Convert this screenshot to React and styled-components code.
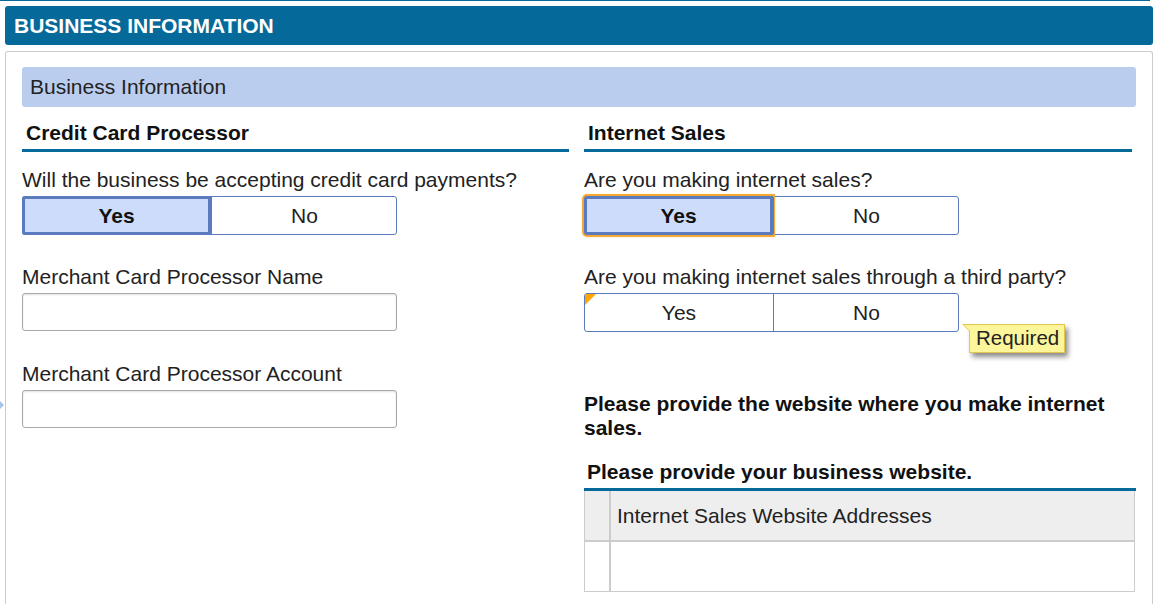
import React from 'react'
import styled, { createGlobalStyle, css } from 'styled-components'

const GlobalStyle = createGlobalStyle`
  html, body {
    margin: 0;
    padding: 0;
    background: #ffffff;
  }
  body {
    font-family: "Liberation Sans", Arial, sans-serif;
    color: #222222;
  }
`

const Page = styled.div`
  position: relative;
  width: 1159px;
  height: 604px;
  overflow: hidden;
`

const TopRule = styled.div`
  height: 1px;
  margin-right: 9px;
  background: #05699a;
`

const HeaderBar = styled.div`
  margin: 5px 6px 0 5px;
  height: 39px;
  padding: 0 9px;
  display: flex;
  align-items: center;
  background: #05699a;
  border-radius: 3px;
  color: #ffffff;
  font-weight: bold;
  font-size: 21px;
`

const Panel = styled.div`
  margin: 6px 6px 0 5px;
  border: 1px solid #cccccc;
  border-bottom: none;
  border-radius: 3px 3px 0 0;
  padding: 15px 16px 0 16px;
  height: 600px;
`

const SectionHeader = styled.div`
  height: 40px;
  padding: 0 8px;
  display: flex;
  align-items: center;
  background: #bbcdee;
  border-radius: 3px;
  font-size: 21px;
  color: #222222;
`

const Columns = styled.div`
  display: grid;
  grid-template-columns: 547px 1fr;
  column-gap: 15px;
  margin-top: 14px;
`

const Column = styled.div`
  display: flex;
  flex-direction: column;
`

const Heading = styled.div`
  font-weight: bold;
  font-size: 21px;
  line-height: 24px;
  color: #111111;
  padding: 0 0 4px ${p => (p.$inset ? 3 : 4)}px;
  margin-right: ${p => p.$mr || 0}px;
  border-bottom: 3px solid #05699a;
`

const Field = styled.div`
  position: relative;
  margin-top: ${p => p.$top ?? 30}px;
  display: flex;
  flex-direction: column;
  gap: 4px;
`

const Label = styled.div`
  font-size: 21px;
  line-height: 24px;
  color: #222222;
`

const Toggle = styled.div`
  display: flex;
  width: 375px;
  height: 39px;
  box-sizing: border-box;
  border: 1px solid #5a7cbf;
  border-radius: 3px;
  background: #ffffff;
  position: relative;
`

const Segment = styled.div`
  flex: 0 0 ${p => p.$w}px;
  box-sizing: border-box;
  display: flex;
  align-items: center;
  justify-content: center;
  font-size: 21px;
  color: #222222;
  & + & {
    border-left: 1px solid #5a7cbf;
  }
  ${p => p.$on && css`
    margin: -1px 0 -1px -1px;
    flex-basis: ${p.$w + 1}px;
    background: #cddcfb;
    border: 3px solid #5a7cbf;
    border-radius: 3px 0 0 3px;
    font-weight: bold;
    color: #111111;
  `}
  ${p => p.$focus && css`
    box-shadow: 0 0 1px 2px #f7a32a;
  `}
`

const RequiredMark = styled.span`
  position: absolute;
  left: 0;
  top: 0;
  width: 0;
  height: 0;
  border-top: 11px solid #ffa500;
  border-right: 11px solid transparent;
  border-top-left-radius: 2px;
`

const Tooltip = styled.div`
  position: absolute;
  left: 385px;
  top: 59px;
  padding: 1px 5px 2px 6px;
  background: #fcf59a;
  border: 1px solid #e2c74c;
  box-shadow: 3px 4px 5px rgba(0, 0, 0, 0.45);
  font-size: 20.5px;
  line-height: 24px;
  color: #222222;
  &::before {
    content: '';
    position: absolute;
    left: -8px;
    top: -1px;
    width: 0;
    height: 0;
    border-top: 8px solid #e2c74c;
    border-left: 8px solid transparent;
  }
  &::after {
    content: '';
    position: absolute;
    left: -6px;
    top: 0;
    width: 0;
    height: 0;
    border-top: 7px solid #fcf59a;
    border-left: 7px solid transparent;
  }
`

const TextInput = styled.input`
  width: 375px;
  height: 38px;
  box-sizing: border-box;
  border: 1px solid #a9a9a9;
  border-radius: 3px;
  box-shadow: inset 0 1px 2px rgba(0, 0, 0, 0.12);
  font-family: inherit;
  font-size: 18px;
  padding: 0 8px;
  outline: none;
`

const Note = styled.div`
  margin-top: 60px;
  font-weight: bold;
  font-size: 21px;
  line-height: 24px;
  color: #111111;
  padding-right: 20px;
`

const GridBlock = styled.div`
  margin-top: 20px;
  display: flex;
  flex-direction: column;
`

const DataGrid = styled.div`
  display: grid;
  grid-template-columns: 26px 1fr;
  grid-template-rows: 51px 49px;
  border: 1px solid #cccccc;
  border-top: none;
  margin-right: 1px;
`

const Cell = styled.div`
  display: flex;
  align-items: center;
  padding-left: ${p => (p.$pad ? 6 : 0)}px;
  font-size: 21px;
  color: #222222;
  background: ${p => (p.$head ? '#eeeeee' : '#ffffff')};
  border-bottom: ${p => (p.$head ? '2px solid #cccccc' : 'none')};
  border-right: ${p => (p.$first ? '2px solid #cccccc' : 'none')};
`

const EdgeArrow = styled.span`
  position: absolute;
  left: 0;
  top: 401px;
  width: 0;
  height: 0;
  border-top: 4px solid transparent;
  border-bottom: 4px solid transparent;
  border-left: 4px solid #a9c3ea;
`

function YesNo({ value, focus, required }) {
  return (
    <Toggle>
      {required && <RequiredMark />}
      <Segment $w={188} $on={value === 'yes'} $focus={focus}>Yes</Segment>
      <Segment $w={186}>No</Segment>
    </Toggle>
  )
}

export default function App() {
  return (
    <>
      <GlobalStyle />
      <Page>
        <TopRule />
        <HeaderBar>BUSINESS INFORMATION</HeaderBar>
        <Panel>
          <SectionHeader>Business Information</SectionHeader>
          <Columns>
            <Column>
              <Heading>Credit Card Processor</Heading>
              <Field $top={16}>
                <Label>Will the business be accepting credit card payments?</Label>
                <YesNo value="yes" />
              </Field>
              <Field>
                <Label>Merchant Card Processor Name</Label>
                <TextInput type="text" />
              </Field>
              <Field $top={31}>
                <Label>Merchant Card Processor Account</Label>
                <TextInput type="text" />
              </Field>
            </Column>
            <Column>
              <Heading $mr={4}>Internet Sales</Heading>
              <Field $top={16}>
                <Label>Are you making internet sales?</Label>
                <YesNo value="yes" focus />
              </Field>
              <Field>
                <Label>Are you making internet sales through a third party?</Label>
                <YesNo required />
                <Tooltip>Required</Tooltip>
              </Field>
              <Note>Please provide the website where you make internet sales.</Note>
              <GridBlock>
                <Heading $inset>Please provide your business website.</Heading>
                <DataGrid>
                  <Cell $head $first />
                  <Cell $head $pad>Internet Sales Website Addresses</Cell>
                  <Cell $first />
                  <Cell />
                </DataGrid>
              </GridBlock>
            </Column>
          </Columns>
        </Panel>
        <EdgeArrow />
      </Page>
    </>
  )
}
